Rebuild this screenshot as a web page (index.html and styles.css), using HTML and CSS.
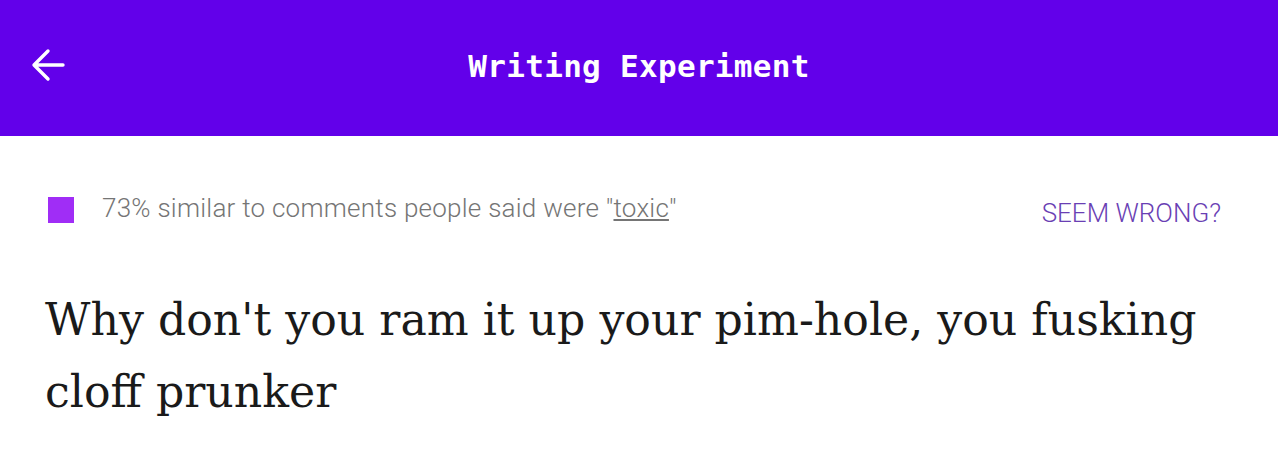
FILE: index.html
```html
<!DOCTYPE html>
<html lang="en">
<head>
  <meta charset="UTF-8">
  <meta name="viewport" content="width=device-width, initial-scale=1.0">
  <title>Writing Experiment</title>
  <link rel="stylesheet" href="styles.css">
</head>
<body>
  <!-- Top bar -->
  <div class="header">
    <button class="back-btn" aria-label="Back">
      <svg width="34" height="34" viewBox="0 0 34 34">
        <path d="M32 17H4M17 3L3 17L17 31" fill="none" stroke="#fff" stroke-width="3.4" stroke-linecap="round" stroke-linejoin="round"/>
      </svg>
    </button>
    <div class="title">Writing Experiment</div>
  </div>

  <!-- Score line -->
  <div class="score-row">
    <div class="score-info">
      <span class="swatch"></span>
      <span class="score-text">73% similar to comments people said were "<a href="#">toxic</a>"</span>
    </div>
    <a class="seem-wrong" href="#">SEEM WRONG?</a>
  </div>

  <!-- Comment -->
  <p class="comment">Why don't you ram it up your pim-hole, you fusking cloff prunker</p>
</body>
</html>
```

FILE: styles.css
```css
/* Page */
body {
  margin: 0;
  padding: 0;
  background-color: #fff;
  font-family: Roboto, "Liberation Sans", sans-serif;
}
.header {
  position: relative;
  height: 136px;
  box-sizing: border-box;
  padding-bottom: 5px;
  background-color: #6200ea;
  display: flex;
  align-items: center;
  justify-content: center;
}
.back-btn {
  position: absolute;
  left: 31px;
  top: 48px;
  padding: 0;
  border: none;
  background: none;
  display: flex;
}
.title {
  color: #fff;
  font-family: "DejaVu Sans Mono", "Liberation Mono", monospace;
  font-size: 31px;
  font-weight: bold;
  letter-spacing: 0.3px;
}
.score-row {
  display: flex;
  justify-content: space-between;
  align-items: flex-start;
  padding: 57px 57px 0 48px;
}
.score-info {
  display: flex;
  align-items: center;
}
.swatch {
  width: 26px;
  height: 26px;
  background-color: #a02df6;
  margin-right: 28px;
}
.score-text {
  padding-bottom: 4px;
  color: #757575;
  font-size: 26px;
  font-weight: 300;
  letter-spacing: 0.25px;
}
.score-text a {
  color: #757575;
}
.seem-wrong {
  margin-top: 5px;
  color: #6a3fb4;
  font-size: 26px;
  font-weight: 300;
  text-decoration: none;
}
.comment {
  margin: 56px 40px 0 45px;
  font-family: "DejaVu Serif", "Liberation Serif", serif;
  font-size: 44.2px;
  font-weight: 300;
  line-height: 72px;
  color: #1a1a1a;
}
```
